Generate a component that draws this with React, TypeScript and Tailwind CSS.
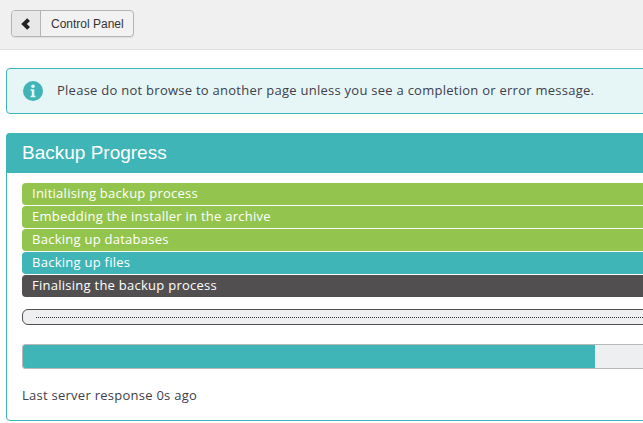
const steps = [
  { label: "Initialising backup process", tone: "bg-[#93c44e]" },
  { label: "Embedding the installer in the archive", tone: "bg-[#93c44e]" },
  { label: "Backing up databases", tone: "bg-[#93c44e]" },
  { label: "Backing up files", tone: "bg-[#40b5b8]" },
  { label: "Finalising the backup process", tone: "bg-[#514f50]" },
];

export default function App() {
  return (
    <div className="h-[423px] w-[643px] overflow-hidden bg-white font-['Open_Sans',sans-serif] text-[13px] tracking-[0.02em] text-[#40404a]">
      <header className="h-[50px] border-b border-[#e0e0e0] bg-[#f0f0f0] pl-[11px] pt-[10px]">
        <div className="flex h-[27px] w-[123px] rounded-[4px] border border-[#b4b4b4] bg-[#f2f2f2] font-['Liberation_Sans',sans-serif] text-[12px] tracking-normal text-[#333] shadow-[0_1px_1px_rgba(0,0,0,0.08)]">
          <span className="flex w-[29px] items-center justify-center rounded-l-[3px] border-r border-[#b4b4b4] bg-[#e8e8e8]">
            <svg width="10" height="12" viewBox="0 0 10 12">
              <path d="M6.2 0.3 L9 2.9 L5.8 6 L9 9.1 L6.2 11.7 L0.2 6 Z" fill="#222" />
            </svg>
          </span>
          <span className="flex flex-1 items-center pl-[10px]">Control Panel</span>
        </div>
      </header>

      <main className="w-[720px] pl-[6px] pt-[18px]">
        <div className="flex h-[46px] items-center rounded-[4px] border border-[#40b5b8] bg-[#e6f6f7] pl-[16px]">
          <svg width="20" height="20" viewBox="0 0 20 20" className="shrink-0">
            <circle cx="10" cy="10" r="10" fill="#40b5b8" />
            <circle cx="10" cy="5.2" r="1.8" fill="#e6f6f7" />
            <path d="M7.6 8.2h3.7v6.6h1.2v1.5H7.6v-1.5h1.2V9.7H7.6z" fill="#e6f6f7" />
          </svg>
          <p className="ml-[14px]">
            Please do not browse to another page unless you see a completion or error message.
          </p>
        </div>

        <section className="mt-[19px] h-[288px] rounded-[4px] border border-[#40b5b8]">
          <h2 className="-mx-px -mt-px flex h-[40px] items-center rounded-t-[4px] bg-[#40b5b8] pl-[16px] font-['Liberation_Sans',sans-serif] text-[19px] tracking-normal text-white">
            Backup Progress
          </h2>

          <div className="px-[15px] pt-[10px]">
            <ul className="flex flex-col gap-px">
              {steps.map((step) => (
                <li
                  key={step.label}
                  className={`flex h-[22px] items-center rounded-[4px] pl-[10px] text-white ${step.tone}`}
                >
                  {step.label}
                </li>
              ))}
            </ul>

            <div className="mt-[12px] flex h-[16px] items-center rounded-[6px] border border-[#514f50] bg-[#eeeff1] pl-[13px]">
              <div className="w-full border-t border-dotted border-[#333]" />
            </div>

            <div className="mt-[19px] h-[25px] rounded-[3px] border border-[#b8b8b8] bg-[#eeeff1]">
              <div className="h-full w-[572px] rounded-l-[2px] bg-[#40b5b8]" />
            </div>

            <p className="mt-[17px]">Last server response 0s ago</p>
          </div>
        </section>
      </main>
    </div>
  );
}
